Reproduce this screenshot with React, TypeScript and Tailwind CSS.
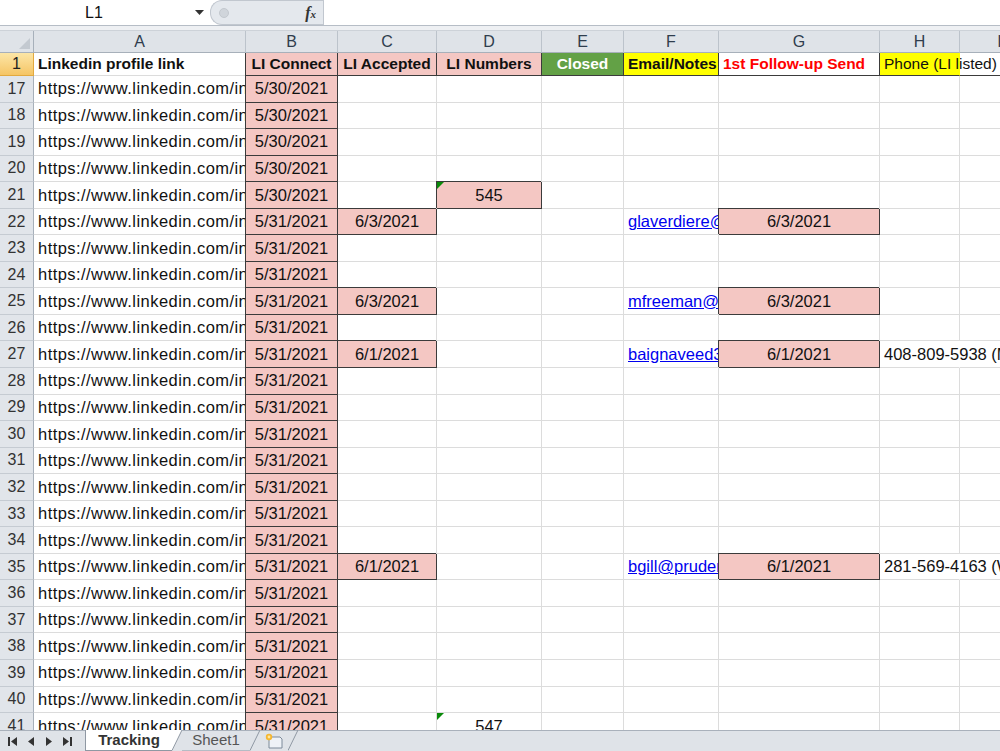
import React from "react";
import clsx from "clsx";

type Cell = {
  text?: string;
  fill?: "pink" | "green" | "yellow";
  box?: boolean;
  darkB?: boolean;
  center?: boolean;
  bold?: boolean;
  red?: boolean;
  white?: boolean;
  link?: boolean;
  url?: boolean;
  tri?: boolean;
  spill?: boolean;
};

const cols = [
  { key: "A", w: "w-[212px]" },
  { key: "B", w: "w-[92px]" },
  { key: "C", w: "w-[99px]" },
  { key: "D", w: "w-[105px]" },
  { key: "E", w: "w-[82px]" },
  { key: "F", w: "w-[95px]" },
  { key: "G", w: "w-[161px]" },
  { key: "H", w: "w-[80px]" },
  { key: "I", w: "w-[80px]" },
];

const fills = {
  pink: "bg-[#f4c7c3]",
  green: "bg-[#63a146]",
  yellow: "bg-[#ffff00]",
};

const URL = "https://www.linkedin.com/in/";

const header: Record<string, Cell> = {
  A: { text: "Linkedin profile link", bold: true },
  B: { text: "LI Connect", bold: true, fill: "pink", box: true, center: true },
  C: { text: "LI Accepted", bold: true, fill: "pink", box: true, center: true },
  D: { text: "LI Numbers", bold: true, fill: "pink", box: true, center: true },
  E: { text: "Closed", bold: true, fill: "green", box: true, center: true, white: true },
  F: { text: "Email/Notes", bold: true, fill: "yellow", box: true },
  G: { text: "1st Follow-up Send", bold: true, box: true, red: true },
  H: { text: "Phone (LI listed)", fill: "yellow", darkB: true, spill: true },
  I: { darkB: true },
};

const pinkDate = (d: string): Cell => ({ text: d, fill: "pink", box: true, center: true });

function buildRows() {
  const rows: { n: number; cells: Record<string, Cell> }[] = [];
  for (let n = 17; n <= 41; n++) {
    const cells: Record<string, Cell> = {
      A: { text: URL, url: true },
      B: pinkDate(n <= 21 ? "5/30/2021" : "5/31/2021"),
    };
    if (n === 21) cells.D = { text: "545", fill: "pink", box: true, center: true, tri: true };
    if (n === 41) cells.D = { text: "547", center: true, tri: true };
    if (n === 22) {
      cells.C = pinkDate("6/3/2021");
      cells.F = { text: "glaverdiere@prudential.com", link: true };
      cells.G = pinkDate("6/3/2021");
    }
    if (n === 25) {
      cells.C = pinkDate("6/3/2021");
      cells.F = { text: "mfreeman@wellsfargo.com", link: true };
      cells.G = pinkDate("6/3/2021");
    }
    if (n === 27) {
      cells.C = pinkDate("6/1/2021");
      cells.F = { text: "baignaveed3@gmail.com", link: true };
      cells.G = pinkDate("6/1/2021");
      cells.H = { text: "408-809-5938 (Mobile)", spill: true };
    }
    if (n === 35) {
      cells.C = pinkDate("6/1/2021");
      cells.F = { text: "bgill@prudential.com", link: true };
      cells.G = pinkDate("6/1/2021");
      cells.H = { text: "281-569-4163 (Work)", spill: true };
    }
    rows.push({ n, cells });
  }
  return rows;
}

function GridCell({ w, cell, head }: { w: string; cell?: Cell; head?: boolean }) {
  const c = cell ?? {};
  return (
    <div
      className={clsx(
        "relative shrink-0 flex items-center whitespace-nowrap border-r border-b",
        w,
        c.spill ? "overflow-visible" : "overflow-hidden",
        c.box ? "border-r-[#3b3b3b]" : c.spill ? "border-r-transparent" : "border-r-[#dcdcdc]",
        c.box || c.darkB ? "border-b-[#3b3b3b]" : "border-b-[#dcdcdc]",
        c.box && "shadow-[-1px_-1px_0_0_#3b3b3b]",
        c.fill && fills[c.fill],
        c.center ? "justify-center" : "pl-[4px]",
        head ? "text-[15.5px]" : "text-[16.5px]",
        c.bold && "font-bold",
        c.url && "tracking-[0.45px]",
        c.red ? "text-[#ff0000]" : c.white ? "text-white" : c.link ? "text-[#0000ee] underline" : "text-[#111]"
      )}
    >
      {c.tri && (
        <svg className="absolute top-0 left-0" width="7" height="7" viewBox="0 0 7 7">
          <polygon points="0,0 7,0 0,7" fill="#0a8a0a" />
        </svg>
      )}
      {c.text}
    </div>
  );
}

function FormulaBar() {
  return (
    <div className="h-[25px] shrink-0 flex bg-white">
      <div className="w-[188px] flex items-center justify-center text-[16px] text-[#111]">L1</div>
      <div className="w-[22px] flex items-center justify-center">
        <svg width="9" height="5" viewBox="0 0 9 5">
          <polygon points="0,0 9,0 4.5,5" fill="#333" />
        </svg>
      </div>
      <div className="w-[113px] h-[25px] rounded-l-[12px] bg-[#e4e8ed] border border-r-0 border-[#c1c7cf] flex items-center justify-between pl-[8px] pr-[7px]">
        <span className="w-[10px] h-[10px] rounded-full bg-[#d0d5db] border border-[#c3c8ce]" />
        <span className="font-['Liberation_Serif',serif] italic font-bold text-[16px] text-[#333] leading-none">
          f<span className="text-[11px]">x</span>
        </span>
      </div>
      <div className="flex-1 border-l border-[#c1c7cf]" />
    </div>
  );
}

function ColumnHeaders() {
  return (
    <div className="h-[22px] shrink-0 flex bg-[#dfe3e8]">
      <div className="w-[34px] shrink-0 flex items-end justify-end pr-[3px] pb-[3px] border-r border-b border-[#a7b0ba]">
        <svg width="11" height="11" viewBox="0 0 11 11">
          <polygon points="11,0 11,11 0,11" fill="#c3c9d0" />
        </svg>
      </div>
      {cols.map((c) => (
        <div
          key={c.key}
          className={clsx(
            "shrink-0 flex items-center justify-center border-r border-r-[#bcc3cb] border-b border-b-[#a7b0ba] text-[16px] text-[#2f3d4d]",
            c.w
          )}
        >
          {c.key}
        </div>
      ))}
    </div>
  );
}

function RowHead({ n, active }: { n: number; active?: boolean }) {
  return (
    <div
      className={clsx(
        "w-[34px] shrink-0 flex items-center justify-center border-r border-b text-[16px]",
        active
          ? "bg-gradient-to-b from-[#fce6a6] to-[#f5c564] border-r-[#e2a93f] border-b-[#e2a93f] text-[#222]"
          : "bg-[#e1e5ea] border-r-[#a7b0ba] border-b-[#c5cbd2] text-[#333]"
      )}
    >
      {n}
    </div>
  );
}

function TabBar() {
  return (
    <div className="h-[21px] shrink-0 flex items-stretch bg-[#dfe3e8] border-t border-[#a9b1bb] text-[15px]">
      <div className="w-[85px] flex items-center gap-[10px] pl-[8px]">
        <svg width="9" height="9" viewBox="0 0 9 9">
          <rect x="0" y="0" width="2" height="9" fill="#333" />
          <polygon points="9,0 9,9 3,4.5" fill="#333" />
        </svg>
        <svg width="8" height="9" viewBox="0 0 8 9">
          <polygon points="7,0 7,9 1,4.5" fill="#333" />
        </svg>
        <svg width="8" height="9" viewBox="0 0 8 9">
          <polygon points="1,0 1,9 7,4.5" fill="#333" />
        </svg>
        <svg width="9" height="9" viewBox="0 0 9 9">
          <polygon points="0,0 0,9 6,4.5" fill="#333" />
          <rect x="7" y="0" width="2" height="9" fill="#333" />
        </svg>
      </div>
      <div className="w-[87px] -mt-px bg-white border-l border-b border-[#8f98a3] flex items-center justify-center font-bold text-[#333]">
        Tracking
      </div>
      <svg width="10" height="21" viewBox="0 0 10 21" className="-mt-px shrink-0">
        <polygon points="0,0 10,0 0,21" fill="#ffffff" />
        <line x1="0" y1="20.5" x2="10" y2="0" stroke="#8f98a3" />
      </svg>
      <div className="w-[68px] flex items-center justify-center text-[#555] border-b border-[#b5bcc5]">
        Sheet1
      </div>
      <svg width="10" height="21" viewBox="0 0 10 21" className="-mt-px shrink-0">
        <line x1="0" y1="20.5" x2="10" y2="0" stroke="#8f98a3" />
      </svg>
      <div className="w-[28px] flex items-center justify-center">
        <svg width="20" height="16" viewBox="0 0 20 16">
          <path d="M5 4 h11 l2 2 v9 h-13 z" fill="#eef2f7" stroke="#7d8a99" />
          <circle cx="5" cy="4" r="3.2" fill="#f5b731" />
          <circle cx="5" cy="4" r="1.4" fill="#fde6a0" />
        </svg>
      </div>
      <svg width="10" height="21" viewBox="0 0 10 21" className="-mt-px shrink-0">
        <line x1="0" y1="20.5" x2="10" y2="0" stroke="#8f98a3" />
      </svg>
    </div>
  );
}

export default function App() {
  const rows = buildRows();
  return (
    <div className="w-[1000px] h-[751px] flex flex-col overflow-hidden bg-white font-['Liberation_Sans',Arial,sans-serif]">
      <FormulaBar />
      <div className="h-[6px] shrink-0 bg-[#eef0f3] border-t border-t-[#b6bdc6] border-b border-b-[#cdd2d8]" />
      <ColumnHeaders />
      <div className="flex-1 overflow-hidden">
        <div className="h-[23px] flex">
          <RowHead n={1} active />
          {cols.map((c) => (
            <GridCell key={c.key} w={c.w} cell={header[c.key]} head />
          ))}
        </div>
        {rows.map((r) => (
          <div key={r.n} className="h-[26.55px] flex">
            <RowHead n={r.n} />
            {cols.map((c) => (
              <GridCell key={c.key} w={c.w} cell={r.cells[c.key]} />
            ))}
          </div>
        ))}
      </div>
      <TabBar />
    </div>
  );
}
